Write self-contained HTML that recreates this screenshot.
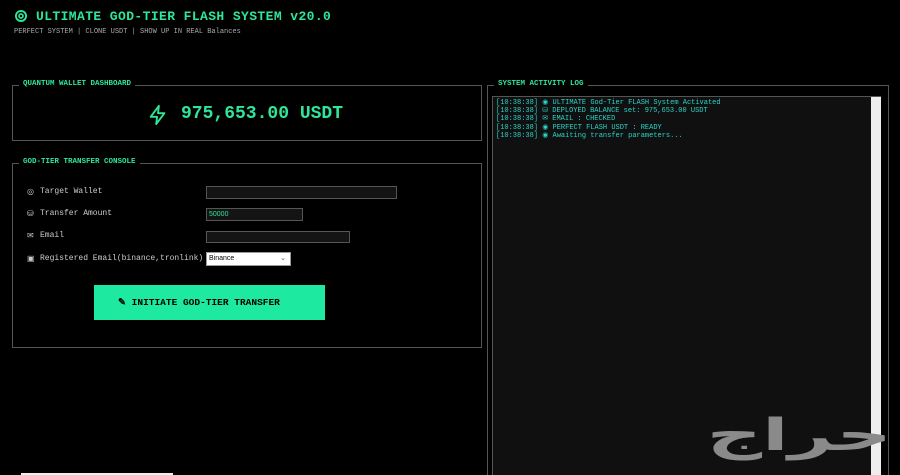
<!DOCTYPE html>
<html><head><meta charset="utf-8"><style>
*{margin:0;padding:0;box-sizing:border-box}
html,body{width:900px;height:475px;overflow:hidden}
body{background:#000;position:relative;font-family:"Liberation Mono",monospace;color:#ccc}
.a{position:absolute}
.title{left:36px;top:9px;font-size:13px;font-weight:bold;color:#2ee69a;letter-spacing:0.4px}
.sub{left:14px;top:28px;font-size:7px;color:#aaa}
.fs{position:absolute;border:1px solid #555}
.lg{position:absolute;top:-6px;left:6px;background:#000;padding:0 4px;font-size:7.5px;font-weight:bold;color:#2ee69a}
.lbl{font-size:8px;color:#ccc;left:40px}
.ico{left:27px;font-size:8px;color:#ccc}
.in{background:#141414;border:1px solid #555}
.log{font-size:7px;color:#2ad5c8;line-height:8.2px;left:496px;top:99px;white-space:pre}
</style></head><body>
<svg class="a" style="left:14px;top:9px" width="14" height="14" viewBox="0 0 14 14"><circle cx="7" cy="7" r="6" fill="#2ee69a"/><circle cx="7" cy="7" r="3.5" fill="none" stroke="#000" stroke-width="1.3"/><circle cx="7" cy="7" r="1.2" fill="#000"/></svg>
<div class="a title">ULTIMATE GOD-TIER FLASH SYSTEM v20.0</div>
<div class="a sub">PERFECT SYSTEM | CLONE USDT | SHOW UP IN REAL Balances</div>

<div class="fs" style="left:12px;top:85px;width:470px;height:56px"><div class="lg">QUANTUM WALLET DASHBOARD</div></div>
<svg class="a" style="left:147px;top:104px" width="22" height="22" viewBox="0 0 24 24"><path d="M13 2L4 14h7l-1 8 9-12h-7l1-8z" fill="none" stroke="#2ee69a" stroke-width="2" stroke-linejoin="round"/></svg>
<div class="a" style="left:181px;top:104px;font-size:18px;color:#2ee69a;font-weight:bold">975,653.00 USDT</div>

<div class="fs" style="left:12px;top:163px;width:470px;height:185px"><div class="lg">GOD-TIER TRANSFER CONSOLE</div></div>
<div class="a ico" style="top:187px">◎</div><div class="a lbl" style="top:187px">Target Wallet</div>
<div class="a ico" style="top:209px">⛁</div><div class="a lbl" style="top:209px">Transfer Amount</div>
<div class="a ico" style="top:231px">✉</div><div class="a lbl" style="top:231px">Email</div>
<div class="a ico" style="top:254px">▣</div><div class="a lbl" style="top:254px">Registered Email(binance,tronlink)</div>
<div class="a in" style="left:206px;top:186px;width:191px;height:13px"></div>
<div class="a in" style="left:206px;top:208px;width:97px;height:13px;font-size:7px;color:#2ee69a;padding:2px 2px;font-family:'Liberation Sans',sans-serif">50000</div>
<div class="a in" style="left:206px;top:231px;width:144px;height:12px"></div>
<div class="a" style="left:206px;top:252px;width:85px;height:14px;background:#fff;border:1px solid #999;font-family:'Liberation Sans',sans-serif;font-size:7px;color:#000;padding:2px 2px">Binance<span style="position:absolute;right:4px;top:1px;font-size:7px;color:#555">⌄</span></div>
<div class="a" style="left:94px;top:285px;width:231px;height:35px;background:#1ee9a0"></div>
<div class="a" style="left:118px;top:297px;font-size:9.5px;font-weight:bold;color:#000">&#x270E; INITIATE GOD-TIER TRANSFER</div>

<div class="fs" style="left:487px;top:85px;width:402px;height:400px"><div class="lg">SYSTEM ACTIVITY LOG</div></div>
<div class="a" style="left:492px;top:96px;width:389px;height:390px;background:#101010;border:1px solid #555"></div>
<div class="a" style="left:871px;top:97px;width:10px;height:380px;background:#eee"></div>
<div class="a log">[10:38:38] ◉ ULTIMATE God-Tier FLASH System Activated
[10:38:38] ⛁ DEPLOYED BALANCE set: 975,653.00 USDT
[10:38:38] ✉ EMAIL : CHECKED
[10:38:38] ◉ PERFECT FLASH USDT : READY
[10:38:38] ◉ Awaiting transfer parameters...</div>
<div class="a" style="right:8px;top:406px;font-family:'DejaVu Sans',sans-serif;font-size:44px;font-weight:bold;color:#8a8a8a;transform:scaleX(1.75);transform-origin:right;line-height:60px">حراج</div>
<div class="a" style="left:21px;top:473px;width:152px;height:2px;background:#eee"></div>
</body></html>
